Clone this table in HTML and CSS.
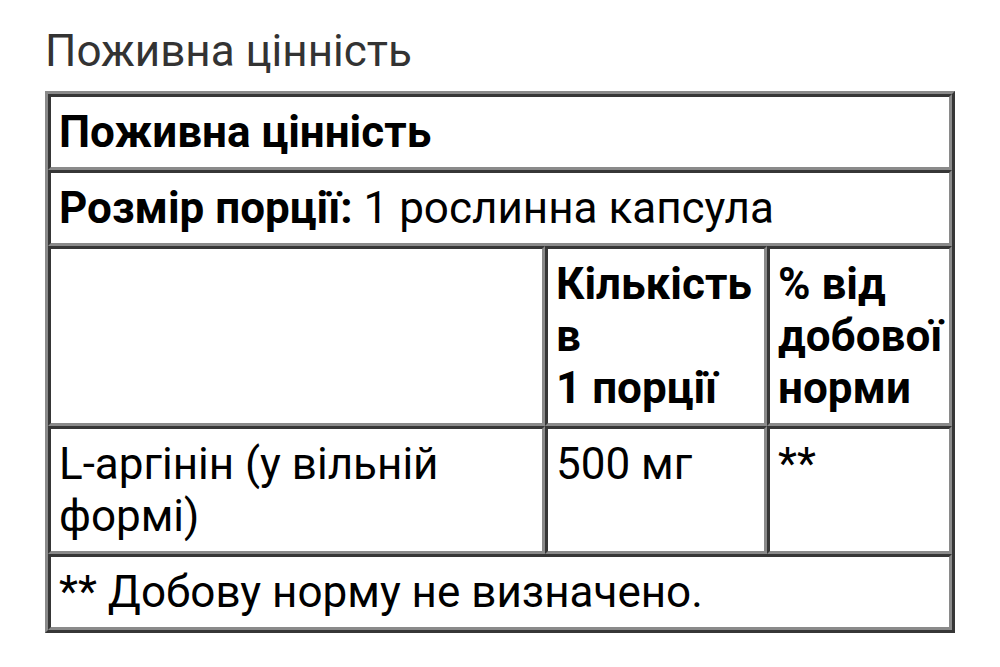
FILE: index.html
```html
<!DOCTYPE html>
<html lang="uk">
<head>
<meta charset="utf-8">
<link rel="stylesheet" href="styles.css">
</head>
<body>
<div class="page">
  <div class="title">Поживна цінність</div>
  <table class="facts">
    <colgroup>
      <col class="c1"><col class="c2"><col class="c3">
    </colgroup>
    <tr><td colspan="3" class="b">Поживна цінність</td></tr>
    <tr><td colspan="3"><span class="b">Розмір порції:</span> 1 рослинна капсула</td></tr>
    <tr><td></td><td class="b">Кількість в<br>1 порції</td><td class="b">% від добової норми</td></tr>
    <tr><td>L-аргінін (у вільній формі)</td><td>500 мг</td><td>**</td></tr>
    <tr><td colspan="3">** Добову норму не визначено.</td></tr>
  </table>
</div>
</body>
</html>
```

FILE: styles.css
```css
html, body {
  margin: 0;
  padding: 0;
  background: #fff;
}
.page {
  padding: 25px 45px 0 45px;
  font-family: Roboto, "Noto Sans", sans-serif;
}
.title {
  font-size: 44px;
  line-height: 52px;
  color: #333;
  margin: 0 0 14px 0;
}
.facts {
  border-collapse: separate;
  border-spacing: 0;
  border: 3px outset #8a8a8a;
  width: 910px;
  table-layout: fixed;
  color: #000;
  font-size: 44px;
  line-height: 52px;
}
.c1 { width: 497px; }
.c2 { width: 222px; }
.c3 { width: 185px; }
.facts td {
  border: 3px inset #8a8a8a;
  padding: 9px 4px 9px 8px;
  vertical-align: top;
  text-align: left;
}
.b { font-weight: 700; }
```
